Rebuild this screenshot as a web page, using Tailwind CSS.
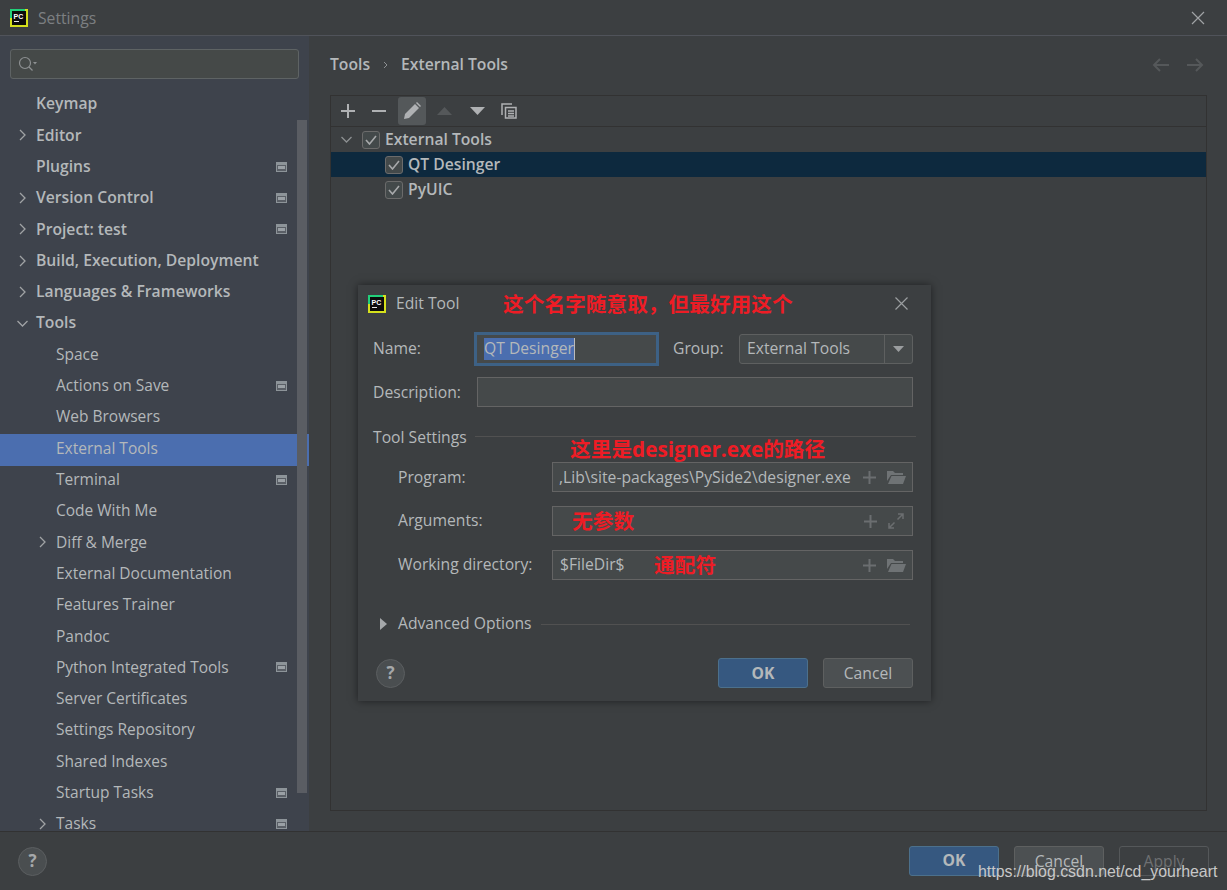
<!DOCTYPE html>
<html lang="en">
<head>
<meta charset="UTF-8">
<title>Settings</title>
<script src="https://cdn.jsdelivr.net/npm/@tailwindcss/browser@4"></script>
</head>
<body class="bg-[#3c3f41] overflow-hidden">
<div class="relative w-[1227px] h-[890px] flex flex-col text-[15.7px] text-[#b4b8ba] font-['Open_Sans','Noto_Sans_CJK_SC',sans-serif]">

  <!-- title bar -->
  <div class="h-[36px] shrink-0 flex items-center pl-[10px] pr-[22px] border-b border-[#50535a] bg-[#3c3f41]">
    <svg width="18" height="18" viewBox="0 0 18 18"><rect width="18" height="18" fill="#d5e01c"/><rect width="15" height="9" fill="#21d07a"/><rect x="2" y="2" width="14" height="14" fill="#0c0c0c"/><rect x="4" y="12" width="5" height="1" fill="#e8e8e8"/><text x="3.5" y="9.5" font-size="7" font-weight="700" fill="#fff" font-family="Liberation Sans">PC</text></svg>
    <span class="ml-[10px] pt-[2px] text-[#7c7f82]">Settings</span>
    <svg class="ml-auto" width="14" height="14" viewBox="0 0 14 14" stroke="#a0a3a5" stroke-width="1.2"><path d="M1 1l12 12M13 1L1 13"/></svg>
  </div>

  <div class="flex flex-1 min-h-0">
    <!-- sidebar -->
    <div class="w-[309px] shrink-0 bg-[#3e434c] relative overflow-hidden">
      <div class="mx-[10px] mt-[13px] h-[30px] rounded-[3px] border border-[#5e6364] bg-[#454948] flex items-center pl-[7px]">
        <svg width="20" height="18" viewBox="0 0 20 18" fill="none" stroke="#8d9092" stroke-width="1.2"><circle cx="7" cy="8" r="5.5"/><path d="M11 12l3.5 3.5"/><path d="M15 7h4l-2 2.500z" fill="#8d9092" stroke="none"/></svg>
      </div>
      <div class="mt-[11px] font-semibold [&>div]:pb-[3px]">
        <div class="h-[31.3px] flex items-center pl-[36px]">Keymap</div>
        <div class="h-[31.3px] flex items-center pl-[19px] gap-[10px]"><svg width="7" height="12" viewBox="0 0 7 12" fill="none" stroke="#a0a3a5" stroke-width="1.300"><path d="M1 1l5 5-5 5"/></svg>Editor</div>
        <div class="h-[31.3px] flex items-center pl-[36px] pr-[22px] justify-between">Plugins<svg width="11" height="10" viewBox="0 0 11 10"><rect width="11" height="10" fill="#8d9499"/><rect x="1" y="3" width="9" height="6" fill="#5a5f66"/><rect x="2" y="4" width="7" height="3" fill="#9aa0a5"/></svg></div>
        <div class="h-[31.3px] flex items-center pl-[19px] pr-[22px] gap-[10px]"><svg width="7" height="12" viewBox="0 0 7 12" fill="none" stroke="#a0a3a5" stroke-width="1.300"><path d="M1 1l5 5-5 5"/></svg>Version Control<svg class="ml-auto" width="11" height="10" viewBox="0 0 11 10"><rect width="11" height="10" fill="#8d9499"/><rect x="1" y="3" width="9" height="6" fill="#5a5f66"/><rect x="2" y="4" width="7" height="3" fill="#9aa0a5"/></svg></div>
        <div class="h-[31.3px] flex items-center pl-[19px] pr-[22px] gap-[10px]"><svg width="7" height="12" viewBox="0 0 7 12" fill="none" stroke="#a0a3a5" stroke-width="1.300"><path d="M1 1l5 5-5 5"/></svg>Project: test<svg class="ml-auto" width="11" height="10" viewBox="0 0 11 10"><rect width="11" height="10" fill="#8d9499"/><rect x="1" y="3" width="9" height="6" fill="#5a5f66"/><rect x="2" y="4" width="7" height="3" fill="#9aa0a5"/></svg></div>
        <div class="h-[31.3px] flex items-center pl-[19px] gap-[10px]"><svg width="7" height="12" viewBox="0 0 7 12" fill="none" stroke="#a0a3a5" stroke-width="1.300"><path d="M1 1l5 5-5 5"/></svg>Build, Execution, Deployment</div>
        <div class="h-[31.3px] flex items-center pl-[19px] gap-[10px]"><svg width="7" height="12" viewBox="0 0 7 12" fill="none" stroke="#a0a3a5" stroke-width="1.300"><path d="M1 1l5 5-5 5"/></svg>Languages &amp; Frameworks</div>
        <div class="h-[31.3px] flex items-center pl-[17px] gap-[8px]"><svg width="11" height="7" viewBox="0 0 11 7" fill="none" stroke="#a0a3a5" stroke-width="1.300"><path d="M0.500 1l5 5 5-5"/></svg>Tools</div>
      </div>
      <div class="text-[15.5px] [&>div]:pb-[3px]">
        <div class="h-[31.3px] flex items-center pl-[56px]">Space</div>
        <div class="h-[31.3px] flex items-center pl-[56px] pr-[22px] justify-between">Actions on Save<svg width="11" height="10" viewBox="0 0 11 10"><rect width="11" height="10" fill="#8d9499"/><rect x="1" y="3" width="9" height="6" fill="#5a5f66"/><rect x="2" y="4" width="7" height="3" fill="#9aa0a5"/></svg></div>
        <div class="h-[31.3px] flex items-center pl-[56px]">Web Browsers</div>
        <div class="h-[31.3px] flex items-center pl-[56px] bg-[#4b6eaf]">External Tools</div>
        <div class="h-[31.3px] flex items-center pl-[56px] pr-[22px] justify-between">Terminal<svg width="11" height="10" viewBox="0 0 11 10"><rect width="11" height="10" fill="#8d9499"/><rect x="1" y="3" width="9" height="6" fill="#5a5f66"/><rect x="2" y="4" width="7" height="3" fill="#9aa0a5"/></svg></div>
        <div class="h-[31.3px] flex items-center pl-[56px]">Code With Me</div>
        <div class="h-[31.3px] flex items-center pl-[39px] gap-[10px]"><svg width="7" height="12" viewBox="0 0 7 12" fill="none" stroke="#a0a3a5" stroke-width="1.300"><path d="M1 1l5 5-5 5"/></svg>Diff &amp; Merge</div>
        <div class="h-[31.3px] flex items-center pl-[56px]">External Documentation</div>
        <div class="h-[31.3px] flex items-center pl-[56px]">Features Trainer</div>
        <div class="h-[31.3px] flex items-center pl-[56px]">Pandoc</div>
        <div class="h-[31.3px] flex items-center pl-[56px] pr-[22px] justify-between">Python Integrated Tools<svg width="11" height="10" viewBox="0 0 11 10"><rect width="11" height="10" fill="#8d9499"/><rect x="1" y="3" width="9" height="6" fill="#5a5f66"/><rect x="2" y="4" width="7" height="3" fill="#9aa0a5"/></svg></div>
        <div class="h-[31.3px] flex items-center pl-[56px]">Server Certificates</div>
        <div class="h-[31.3px] flex items-center pl-[56px]">Settings Repository</div>
        <div class="h-[31.3px] flex items-center pl-[56px]">Shared Indexes</div>
        <div class="h-[31.3px] flex items-center pl-[56px] pr-[22px] justify-between">Startup Tasks<svg width="11" height="10" viewBox="0 0 11 10"><rect width="11" height="10" fill="#8d9499"/><rect x="1" y="3" width="9" height="6" fill="#5a5f66"/><rect x="2" y="4" width="7" height="3" fill="#9aa0a5"/></svg></div>
        <div class="h-[31.3px] flex items-center pl-[39px] pr-[22px] gap-[10px]"><svg width="7" height="12" viewBox="0 0 7 12" fill="none" stroke="#a0a3a5" stroke-width="1.300"><path d="M1 1l5 5-5 5"/></svg>Tasks<svg class="ml-auto" width="11" height="10" viewBox="0 0 11 10"><rect width="11" height="10" fill="#8d9499"/><rect x="1" y="3" width="9" height="6" fill="#5a5f66"/><rect x="2" y="4" width="7" height="3" fill="#9aa0a5"/></svg></div>
      </div>
      <!-- scrollbar -->
      <div class="absolute left-[297px] top-[84px] w-[10px] h-[673px] bg-[#5a5d63]"></div>
    </div>

    <!-- content -->
    <div class="flex-1 flex flex-col pl-[21px] pr-[20px]">
      <div class="h-[59px] shrink-0 flex items-center font-semibold gap-[13px] pb-[2px]">
        <span>Tools</span><svg width="5" height="8" viewBox="0 0 5 8" fill="none" stroke="#8d9092"><path d="M1 1l3 3-3 3"/></svg><span>External Tools</span>
        <svg class="ml-auto" width="17" height="14" viewBox="0 0 17 14" fill="none" stroke="#55585a" stroke-width="2"><path d="M17 7H2M8 1L2 7l6 6"/></svg>
        <svg class="ml-[5px] mr-[3px]" width="17" height="14" viewBox="0 0 17 14" fill="none" stroke="#55585a" stroke-width="2"><path d="M0 7h15M9 1l6 6-6 6"/></svg>
      </div>
      <div class="h-[716px] border border-[#323232] flex flex-col">
        <div class="h-[31px] shrink-0 border-b border-[#323232] flex items-center pl-[10px]">
          <svg width="14" height="14" viewBox="0 0 14 14" stroke="#afb1b3" stroke-width="2"><path d="M0 7h14M7 0v14"/></svg>
          <svg class="ml-[17px]" width="14" height="14" viewBox="0 0 14 14" stroke="#afb1b3" stroke-width="2"><path d="M0 7h14"/></svg>
          <div class="ml-[12px] w-[28px] h-[28px] rounded-[3px] bg-[#54585a] flex items-center justify-center">
            <svg width="18" height="18" viewBox="0 0 18 18" fill="#afb1b3"><path d="M1 17l1-5L12 2l4 4L6 16z"/><path d="M13 1l1-1 4 4-1 1z"/></svg>
          </div>
          <svg class="ml-[11px]" width="15" height="8" viewBox="0 0 15 8" fill="#55585a"><path d="M0 8L7.500 0 15 8z"/></svg>
          <svg class="ml-[18px]" width="15" height="8" viewBox="0 0 15 8" fill="#afb1b3"><path d="M0 0l7.500 8L15 0z"/></svg>
          <svg class="ml-[16px]" width="16" height="16" viewBox="0 0 16 16" fill="none" stroke="#afb1b3" stroke-width="1.500"><path d="M1 12V1h10"/><rect x="4.500" y="4.500" width="10.500" height="10.500" fill="#3c3f41"/><path d="M7 8h6M7 10.500h6M7 13h6"/></svg>
        </div>
        <div class="font-semibold">
          <div class="h-[25px] flex items-center pl-[10px]">
            <svg width="11" height="7" viewBox="0 0 11 7" fill="none" stroke="#8d9092" stroke-width="1.300"><path d="M0.500 1l5 5 5-5"/></svg>
            <span class="ml-[10px] mr-[5px] w-[18px] h-[18px] rounded-[3px] border border-[#6b6b6b] bg-[#43494a] flex items-center justify-center"><svg width="12" height="10" viewBox="0 0 12 10" fill="none" stroke="#a7a9ab" stroke-width="1.600"><path d="M1 5l3.500 4L11 1"/></svg></span>
            External Tools
          </div>
          <div class="h-[25px] flex items-center pl-[54px] bg-[#0d293e]">
            <span class="mr-[5px] w-[18px] h-[18px] rounded-[3px] border border-[#6b6b6b] bg-[#43494a] flex items-center justify-center"><svg width="12" height="10" viewBox="0 0 12 10" fill="none" stroke="#a7a9ab" stroke-width="1.600"><path d="M1 5l3.500 4L11 1"/></svg></span>
            QT Desinger
          </div>
          <div class="h-[25px] flex items-center pl-[54px]">
            <span class="mr-[5px] w-[18px] h-[18px] rounded-[3px] border border-[#6b6b6b] bg-[#43494a] flex items-center justify-center"><svg width="12" height="10" viewBox="0 0 12 10" fill="none" stroke="#a7a9ab" stroke-width="1.600"><path d="M1 5l3.500 4L11 1"/></svg></span>
            PyUIC
          </div>
        </div>
      </div>
    </div>
  </div>

  <!-- footer -->
  <div class="h-[59px] shrink-0 border-t border-[#323232] flex items-center pl-[18px] pr-[18px]">
    <div class="w-[29px] h-[29px] rounded-full bg-[#4a4e50] border border-[#5b5e60] flex items-center justify-center font-bold text-[17px] text-[#a5a8aa]">?</div>
    <div class="ml-auto flex gap-[15px]">
      <div class="w-[90px] h-[30px] rounded-[3px] bg-[#365880] border border-[#4c708c] flex items-center justify-center font-bold">OK</div>
      <div class="w-[90px] h-[30px] rounded-[3px] bg-[#4c5052] border border-[#5e6060] flex items-center justify-center pt-[2px]">Cancel</div>
      <div class="w-[90px] h-[30px] rounded-[3px] border border-[#55585a] flex items-center justify-center pt-[2px] text-[#6e7072]">Apply</div>
    </div>
  </div>

  <!-- Edit Tool dialog -->
  <div class="absolute left-[358px] top-[285px] w-[573px] h-[416px] bg-[#3c3f41] shadow-[0_0_8px_rgba(0,0,0,0.5)] flex flex-col pl-[15px] pr-[18px]">
    <div class="h-[37px] shrink-0 flex items-center -ml-[5px] mr-[5px]">
      <svg width="18" height="18" viewBox="0 0 18 18"><rect width="18" height="18" fill="#d5e01c"/><rect width="15" height="9" fill="#21d07a"/><rect x="2" y="2" width="14" height="14" fill="#0c0c0c"/><rect x="4" y="12" width="5" height="1" fill="#e8e8e8"/><text x="3.500" y="9.500" font-size="7" font-weight="700" fill="#fff" font-family="Liberation Sans">PC</text></svg>
      <span class="ml-[10px]">Edit Tool</span>
      <svg class="ml-auto" width="13" height="13" viewBox="0 0 13 13" stroke="#9b9ea0" stroke-width="1.200"><path d="M0.500 0.500l12 12M12.500 0.500l-12 12"/></svg>
    </div>
    <div class="mt-[11px] flex items-center h-[32px]">
      <span class="w-[101px] shrink-0">Name:</span>
      <div class="w-[185px] h-[34px] shrink-0 border-[3px] border-[#3d6185] bg-[#45494a] flex items-center pl-[7px]"><span class="bg-[#4b6eaf] h-[22px] flex items-center border-r border-[#bbb]">QT Desinger</span></div>
      <span class="ml-[14px] w-[66px] shrink-0">Group:</span>
      <div class="w-[174px] h-[30px] rounded-[3px] border border-[#5e6060] bg-[#45494a] flex items-center">
        <span class="pl-[7px] flex-1">External Tools</span>
        <div class="w-[28px] h-full border-l border-[#5e6060] flex items-center justify-center"><svg width="11" height="6" viewBox="0 0 11 6" fill="#9a9d9f"><path d="M0 0h11L5.500 6z"/></svg></div>
      </div>
    </div>
    <div class="mt-[12px] flex items-center h-[30px]">
      <span class="w-[104px] pt-[2px]">Description:</span>
      <div class="flex-1 h-[30px] border border-[#646464] bg-[#45494a]"></div>
    </div>
    <div class="mt-[16px] flex items-center h-[26px] -mr-[3px]">
      <span class="pt-[4px]">Tool Settings</span><div class="ml-[8px] flex-1 h-px bg-[#515151]"></div>
    </div>
    <div class="mt-[13px] flex items-center h-[30px] pl-[25px]">
      <span class="w-[154px] pt-[2px]">Program:</span>
      <div class="flex-1 h-[30px] border border-[#646464] bg-[#45494a] flex items-center pl-[6px] overflow-hidden">
        <span class="whitespace-nowrap pt-[2px]">,Lib\site-packages\PySide2\designer.exe</span>
        <svg class="ml-auto mr-[11px] shrink-0" width="13" height="13" viewBox="0 0 13 13" stroke="#6b6e70" stroke-width="2"><path d="M0 6.500h13M6.500 0v13"/></svg>
        <svg class="mr-[6px] shrink-0" width="19" height="15" viewBox="0 0 19 15" fill="#6f7375"><path d="M0 1h6l2 2h8v2H4L0 11z"/><path d="M4.500 6H19l-3 8H1z"/></svg>
      </div>
    </div>
    <div class="mt-[14px] flex items-center h-[30px] pl-[25px]">
      <span class="w-[154px]">Arguments:</span>
      <div class="flex-1 h-[30px] border border-[#646464] bg-[#45494a] flex items-center pl-[6px]">
        <svg class="ml-auto mr-[11px]" width="13" height="13" viewBox="0 0 13 13" stroke="#6b6e70" stroke-width="2"><path d="M0 6.500h13M6.500 0v13"/></svg>
        <svg class="mr-[8px]" width="16" height="16" viewBox="0 0 16 16" fill="none" stroke="#6b6e70" stroke-width="1.500"><path d="M10 1h5v5M15 1l-5.500 5.500M6 15H1v-5M1 15l5.500-5.500"/></svg>
      </div>
    </div>
    <div class="mt-[14px] flex items-center h-[30px] pl-[25px]">
      <span class="w-[154px]">Working directory:</span>
      <div class="flex-1 h-[30px] border border-[#646464] bg-[#45494a] flex items-center pl-[7px]">
        <span>$FileDir$</span>
        <svg class="ml-auto mr-[11px]" width="13" height="13" viewBox="0 0 13 13" stroke="#6b6e70" stroke-width="2"><path d="M0 6.500h13M6.500 0v13"/></svg>
        <svg class="mr-[6px]" width="19" height="15" viewBox="0 0 19 15" fill="#6f7375"><path d="M0 1h6l2 2h8v2H4L0 11z"/><path d="M4.500 6H19l-3 8H1z"/></svg>
      </div>
    </div>
    <div class="mt-[29px] flex items-center h-[30px] ml-[7px] mr-[3px]">
      <svg width="7" height="12" viewBox="0 0 7 12" fill="#a5a8aa"><path d="M0 0l7 6-7 6z"/></svg>
      <span class="ml-[11px]">Advanced Options</span><div class="ml-[9px] flex-1 h-px bg-[#515151]"></div>
    </div>
    <div class="mt-[19px] flex items-center h-[30px]">
      <div class="w-[29px] h-[29px] ml-[3px] rounded-full bg-[#4a4e50] border border-[#5b5e60] flex items-center justify-center font-bold text-[17px] text-[#a5a8aa]">?</div>
      <div class="ml-auto w-[90px] h-[30px] rounded-[3px] bg-[#365880] border border-[#4c708c] flex items-center justify-center pt-[2px] font-bold">OK</div>
      <div class="ml-[15px] w-[90px] h-[30px] rounded-[3px] bg-[#4c5052] border border-[#5e6060] flex items-center justify-center pt-[2px]">Cancel</div>
    </div>
    <!-- red notes drawn over the screenshot -->
    <span class="absolute left-[145px] top-[4px] text-[20.7px] font-bold text-[#ee1c25] whitespace-nowrap">这个名字随意取，但最好用这个</span>
    <span class="absolute left-[212px] top-[149px] text-[20.7px] font-bold text-[#ee1c25] whitespace-nowrap">这里是designer.exe的路径</span>
    <span class="absolute left-[214px] top-[221px] text-[20.7px] font-bold text-[#ee1c25] whitespace-nowrap">无参数</span>
    <span class="absolute left-[296px] top-[265px] text-[20.7px] font-bold text-[#ee1c25] whitespace-nowrap">通配符</span>
  </div>

  <!-- watermark -->
  <span class="absolute left-[978px] top-[860px] text-[15.9px] text-[#c8c8c8] font-['Liberation_Sans',sans-serif] whitespace-nowrap">https://blog.csdn.net/cd_yourheart</span>
</div>
</body>
</html>
